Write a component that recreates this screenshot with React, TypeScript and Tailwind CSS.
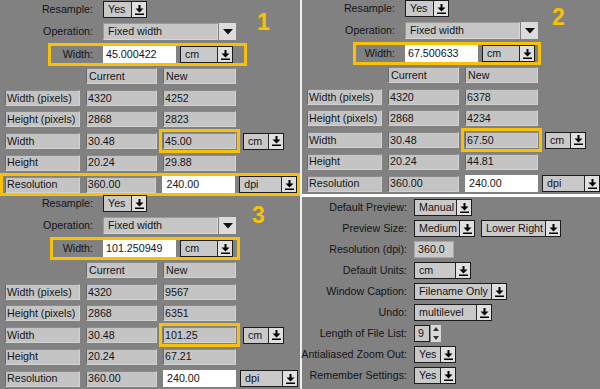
import type React from "react";

const YELLOW = "#f6c106";

const ArrowDownBar = () => (
  <svg width="9" height="10" viewBox="0 0 9 10">
    <path d="M3.5 0h2v3.5h3L4.5 7.5 0.5 3.5h3z" fill="#000" />
    <rect x="0" y="8.5" width="9" height="1.5" fill="#000" />
  </svg>
);

const Triangle = () => (
  <svg width="10" height="6" viewBox="0 0 10 6">
    <path d="M0 0h10L5 5.5z" fill="#111" />
  </svg>
);

const Drop = ({ text, className }: { text: string; className: string }) => (
  <div className={`flex h-[17px] border border-[#1c1c1c] ${className}`}>
    <div className="flex flex-1 items-center overflow-hidden whitespace-nowrap bg-[#c9c9c9] pl-[4px]">
      {text}
    </div>
    <div className="flex w-[15px] items-center justify-center border-l border-[#2a2a2a] bg-[#e0e0e0]">
      <ArrowDownBar />
    </div>
  </div>
);

const Cell = ({
  children,
  className = "",
}: {
  children: React.ReactNode;
  className?: string;
}) => (
  <div
    className={`flex h-[16px] items-center border border-t-[#8a8a8a] border-l-[#6a6a6a] border-r-[#d2d2d2] border-b-[#d2d2d2] bg-[#c4c4c4] pl-[1px] ${className}`}
  >
    {children}
  </div>
);

type PanelProps = {
  num: string;
  width: string;
  news: string[];
  box: string;
  labelW: string;
  numPos: string;
  resHighlight?: boolean;
  className?: string;
};

const labels = ["Width (pixels)", "Height (pixels)", "Width", "Height"];
const current = ["4320", "2868", "30.48", "20.24"];

const ResizePanel = ({
  num,
  width,
  news,
  box,
  labelW,
  numPos,
  resHighlight,
  className = "",
}: PanelProps) => (
  <div className={`relative flex flex-col ${className}`}>
    <div className="flex h-[17px] items-center">
      <span className="mr-[10px] w-[93px] text-right">Resample:</span>
      <Drop text="Yes" className="w-[44px]" />
    </div>
    <div className="mt-[5px] flex h-[17px] items-center">
      <span className="mr-[10px] w-[93px] text-right">Operation:</span>
      <div className="flex h-[17px] w-[115px] items-center border border-t-[#9a9a9a] border-l-[#9a9a9a] border-r-[#d8d8d8] border-b-[#d8d8d8] bg-[#c6c6c6] pl-[4px]">
        Fixed width
      </div>
      <div className="ml-[1px] flex h-[17px] w-[17px] items-center justify-center bg-[#dcdcdc]">
        <Triangle />
      </div>
    </div>
    <div
      className={`mt-[3px] flex h-[23px] items-center border-[3px] border-[#f6c106] ${box}`}
    >
      <span className={`text-right ${labelW}`}>Width:</span>
      <div className="ml-[10px] flex h-[17px] w-[73px] items-center bg-white pl-[3px]">
        {width}
      </div>
      <Drop text="cm" className="ml-[4px] w-[53px]" />
    </div>
    <div className="mt-[2px] flex gap-[6px] pl-[86px]">
      <Cell className="w-[71px] pl-[2px]">Current</Cell>
      <Cell className="w-[73px] pl-[2px]">New</Cell>
    </div>
    <div className="mt-[6px] flex flex-col gap-[5.25px]">
      {labels.map((label, i) => (
        <div className="flex items-center gap-[6px] pl-[5px]" key={label}>
          <Cell className="w-[75px]">{label}</Cell>
          <Cell className="w-[71px]">{current[i]}</Cell>
          {i === 2 ? (
            <Cell className="w-[73px] outline-3 outline-offset-1 outline-[#f6c106]">
              {news[i]}
            </Cell>
          ) : (
            <Cell className="w-[73px]">{news[i]}</Cell>
          )}
          {i === 2 && <Drop text="cm" className="ml-[1px] w-[41px]" />}
        </div>
      ))}
      <div
        className={
          resHighlight
            ? "mx-[3px] flex items-center gap-[6px] pl-[2px] outline-3 outline-[#f6c106]"
            : "flex items-center gap-[6px] pl-[5px]"
        }
      >
        <Cell className="w-[75px]">Resolution</Cell>
        <Cell className="w-[71px]">360.00</Cell>
        <div className="flex h-[17px] w-[73px] items-center bg-white pl-[4px]">240.00</div>
        <Drop text="dpi" className="ml-[-2px] w-[58px]" />
      </div>
    </div>
    <span
      className={`absolute text-[23px] font-bold leading-none ${numPos}`}
      style={{ color: YELLOW }}
    >
      {num}
    </span>
  </div>
);

const Spinner = () => (
  <div className="flex h-[17px]">
    <div className="flex w-[16px] items-center border border-[#1c1c1c] bg-[#c9c9c9] pl-[3px]">9</div>
    <div className="ml-[1px] flex w-[10px] flex-col items-center justify-around bg-[#d8d8d8]">
      <svg width="6" height="4" viewBox="0 0 6 4">
        <path d="M0 4h6L3 0z" fill="#333" />
      </svg>
      <svg width="6" height="4" viewBox="0 0 6 4">
        <path d="M0 0h6L3 4z" fill="#333" />
      </svg>
    </div>
  </div>
);

const prefs: [string, React.ReactNode][] = [
  ["Default Preview:", <Drop key="a" text="Manual" className="w-[58px]" />],
  [
    "Preview Size:",
    <div key="b" className="flex">
      <Drop text="Medium" className="w-[61px]" />
      <Drop text="Lower Right" className="ml-[6px] w-[80px]" />
    </div>,
  ],
  [
    "Resolution (dpi):",
    <div
      key="c"
      className="flex h-[17px] w-[40px] items-center border border-[#a8a8a8] bg-[#cacaca] pl-[3px]"
    >
      360.0
    </div>,
  ],
  ["Default Units:", <Drop key="d" text="cm" className="w-[57px]" />],
  ["Window Caption:", <Drop key="e" text="Filename Only" className="w-[93px]" />],
  ["Undo:", <Drop key="f" text="multilevel" className="w-[78px]" />],
  ["Length of File List:", <Spinner key="g" />],
  ["Antialiased Zoom Out:", <Drop key="h" text="Yes" className="w-[42px]" />],
  ["Remember Settings:", <Drop key="i" text="Yes" className="w-[42px]" />],
];

const Preferences = () => (
  <div className="flex flex-1 flex-col gap-[4px] pt-[2px]">
    {prefs.map(([label, control]) => (
      <div className="flex h-[17px] items-center" key={label}>
        <span className="mr-[7px] flex w-[105px] shrink-0 justify-end whitespace-nowrap">
          {label}
        </span>
        {control}
      </div>
    ))}
  </div>
);

export default function App() {
  return (
    <div className="flex h-[389px] w-[600px] overflow-hidden bg-[#818181] font-['Liberation_Sans',Arial,sans-serif] text-[10.7px] leading-none text-[#141418]">
      <div className="flex w-[300px] flex-col">
        <ResizePanel
          num="1"
          width="45.000422"
          news={["4252", "2823", "45.00", "29.88"]}
          box="ml-[48px] w-[199px]"
          labelW="w-[42px]"
          numPos="left-[257px] top-[11px]"
          resHighlight
          className="h-[194px] pt-[1px]"
        />
        <ResizePanel
          num="3"
          width="101.250949"
          news={["9567", "6351", "101.25", "67.21"]}
          box="ml-[50px] w-[190px]"
          labelW="w-[40px]"
          numPos="left-[252px] top-[10px]"
          className="h-[195px] pt-[1px]"
        />
      </div>
      <div className="w-[2px] bg-[#efefef]" />
      <div className="flex w-[298px] flex-col">
        <ResizePanel
          num="2"
          width="67.500633"
          news={["6378", "4234", "67.50", "44.81"]}
          box="ml-[51px] w-[188px]"
          labelW="w-[39px]"
          numPos="left-[250px] top-[6px]"
          className="h-[194px]"
        />
        <div className="h-[3px] bg-white" />
        <Preferences />
      </div>
    </div>
  );
}
